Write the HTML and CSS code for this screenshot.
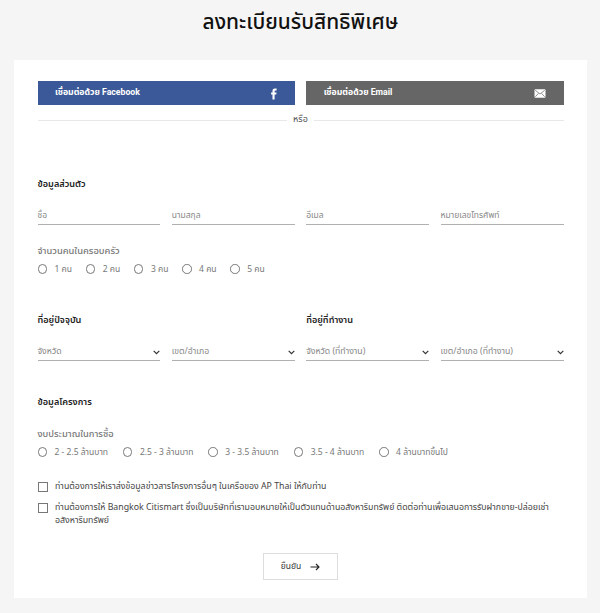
FILE: index.html
```html
<!DOCTYPE html>
<html lang="th">
<head>
<meta charset="utf-8">
<title>ลงทะเบียนรับสิทธิพิเศษ</title>
<link rel="stylesheet" href="styles.css">
</head>
<body>
<h1 class="title">ลงทะเบียนรับสิทธิพิเศษ</h1>
<form class="card">
  <div class="social">
    <button type="button" class="connect facebook"><span>เชื่อมต่อด้วย Facebook</span>
      <svg width="6" height="12" viewBox="0 0 6 12"><path d="M1.5 11.5V6.4H.1V4.4h1.4V3C1.5 1.3 2.5.6 4 .6h1.6v1.9H4.4c-.6 0-.8.3-.8.8v1.1h1.9l-.2 2H3.6v5.1z" fill="#fff"/></svg>
    </button>
    <button type="button" class="connect email"><span>เชื่อมต่อด้วย Email</span>
      <svg width="12" height="9" viewBox="0 0 12 9"><rect x=".5" y=".3" width="11" height="8.4" rx="1" fill="#fff"/><path d="M1.3 1.3L6 5l4.7-3.7M1.3 7.8L4.5 4.3M10.7 7.8L7.5 4.3" fill="none" stroke="#666" stroke-width=".7"/></svg>
    </button>
  </div>
  <div class="divider"><span>หรือ</span></div>

  <h2 class="heading personal"><span>ข้อมูลส่วนตัว</span></h2>
  <div class="grid fields">
    <div class="field"><span>ชื่อ</span></div>
    <div class="field"><span>นามสกุล</span></div>
    <div class="field"><span>อีเมล</span></div>
    <div class="field"><span>หมายเลขโทรศัพท์</span></div>
  </div>
  <h3 class="sub family"><span>จำนวนคนในครอบครัว</span></h3>
  <div class="radios people">
    <label><i></i><span>1 คน</span></label>
    <label><i></i><span>2 คน</span></label>
    <label><i></i><span>3 คน</span></label>
    <label><i></i><span>4 คน</span></label>
    <label><i></i><span>5 คน</span></label>
  </div>

  <div class="pair">
    <h2 class="heading"><span>ที่อยู่ปัจจุบัน</span></h2>
    <h2 class="heading"><span>ที่อยู่ที่ทำงาน</span></h2>
  </div>
  <div class="grid selects">
    <div class="field"><span>จังหวัด</span><svg width="7" height="5" viewBox="0 0 7 5"><path d="M.7.8l2.8 2.8L6.3.8"/></svg></div>
    <div class="field"><span>เขต/อำเภอ</span><svg width="7" height="5" viewBox="0 0 7 5"><path d="M.7.8l2.8 2.8L6.3.8"/></svg></div>
    <div class="field"><span>จังหวัด (ที่ทำงาน)</span><svg width="7" height="5" viewBox="0 0 7 5"><path d="M.7.8l2.8 2.8L6.3.8"/></svg></div>
    <div class="field"><span>เขต/อำเภอ (ที่ทำงาน)</span><svg width="7" height="5" viewBox="0 0 7 5"><path d="M.7.8l2.8 2.8L6.3.8"/></svg></div>
  </div>

  <h2 class="heading project"><span>ข้อมูลโครงการ</span></h2>
  <h3 class="sub budget"><span>งบประมาณในการซื้อ</span></h3>
  <div class="radios prices">
    <label><i></i><span>2 - 2.5 ล้านบาท</span></label>
    <label><i></i><span>2.5 - 3 ล้านบาท</span></label>
    <label><i></i><span>3 - 3.5 ล้านบาท</span></label>
    <label><i></i><span>3.5 - 4 ล้านบาท</span></label>
    <label><i></i><span>4 ล้านบาทขึ้นไป</span></label>
  </div>

  <label class="check first"><i></i><span>ท่านต้องการให้เราส่งข้อมูลข่าวสารโครงการอื่นๆ ในเครือของ AP Thai ให้กับท่าน</span></label>
  <label class="check second"><i></i><span>ท่านต้องการให้ Bangkok Citismart ซึ่งเป็นบริษัทที่เรามอบหมายให้เป็นตัวแทนด้านอสังหาริมทรัพย์ ติดต่อท่านเพื่อเสนอการรับฝากขาย-ปล่อยเช่า<br>อสังหาริมทรัพย์</span></label>

  <button type="button" class="submit"><span>ยืนยัน</span>
    <svg width="10" height="8" viewBox="0 0 10 8"><path d="M.5 4h8.5M6 1l3 3-3 3" fill="none" stroke="#222" stroke-width="1.1"/></svg>
  </button>
</form>
</body>
</html>
```
FILE: styles.css
```css
* { box-sizing: border-box; }
body {
  margin: 0;
  width: 600px;
  height: 613px;
  overflow: hidden;
  background: #f5f5f5;
  font-family: "Noto Sans Thai", "Prompt", "Noto Sans", "Open Sans", sans-serif;
  font-size: 8.5px;
  color: #777;
}
h1, h2, h3 { margin: 0; }
button { font: inherit; border: 0; padding: 0; }
span { white-space: nowrap; }
.title {
  height: 60px;
  padding: 8px 0 0 1px;
  text-align: center;
  font-size: 20.9px;
  line-height: 30px;
  font-weight: 500;
  color: #111;
}
.card {
  width: 573px;
  height: 538px;
  margin-left: 14px;
  padding: 21px 23.5px 0;
  background: #fff;
}
.social, .pair { display: grid; grid-template-columns: 1fr 1fr; column-gap: 11.4px; }
.connect {
  height: 24px;
  display: flex;
  align-items: center;
  justify-content: space-between;
  padding: 0 18px 0 17.5px;
  color: #fff;
  font-family: Roboto, "Noto Sans Thai", "Noto Sans", sans-serif;
  font-weight: 700;
  font-size: 8.7px;
  line-height: 22px;
}
.connect span { margin-top: -2px; }
.connect svg { margin-top: 1px; }
.facebook { background: #3b5998; }
.email { background: #666; }
.divider { display: flex; align-items: center; gap: 6px; height: 29px; line-height: 29px; font-size: 9px; color: #555; }
.divider::before, .divider::after { content: ""; flex: 1; height: 1px; margin-top: 2px; background: #e8e8e8; }
.heading { height: 16px; line-height: 16px; font-size: 9.15px; font-weight: 600; color: #222; }
.personal { margin-top: 42px; }
.grid { display: grid; grid-template-columns: repeat(4, 1fr); column-gap: 11.4px; }
.field {
  height: 20px;
  display: flex;
  align-items: center;
  justify-content: space-between;
  border-bottom: 1px solid #b0b0b0;
  color: #888;
}
.field span { margin-top: 1px; }
.field svg { margin-top: 3px; fill: none; stroke: #333; stroke-width: 1.2; }
.fields { margin-top: 13px; }
.sub { height: 16px; line-height: 16px; font-size: 9.35px; font-weight: 500; color: #777; }
.family { margin-top: 18px; }
.radios { display: flex; height: 16px; margin-top: 2px; }
.radios label { display: flex; align-items: center; gap: 7.5px; }
.radios i { flex: none; width: 9.5px; height: 9.5px; border: 1px solid #777; border-radius: 50%; }
.people label { width: 48.2px; }
.prices label { width: 85.4px; }
.pair { margin-top: 35px; }
.selects { margin-top: 13px; }
.selects .field { height: 20px; font-size: 8.7px; }
.project { margin-top: 33px; }
.budget { margin-top: 16px; }
.check { display: flex; gap: 7.5px; line-height: 13px; font-size: 8.78px; color: #444; }
.check i { flex: none; width: 10px; height: 10px; margin-top: 2px; border: 1px solid #777; }
.first { margin-top: 20px; }
.second { margin-top: 8px; }
.submit {
  width: 75px;
  height: 27px;
  margin: 26px auto 0;
  display: flex;
  align-items: center;
  justify-content: center;
  gap: 9px;
  background: #fff;
  border: 1px solid #ddd;
  color: #333;
}
```
